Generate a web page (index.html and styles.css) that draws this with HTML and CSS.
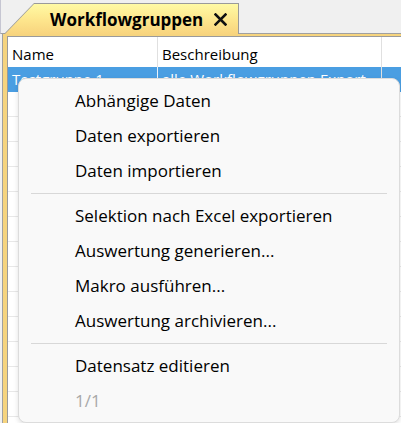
FILE: index.html
```html
<!DOCTYPE html>
<html lang="de">

<head>
    <meta charset="UTF-8">
    <meta name="viewport" content="width=device-width, initial-scale=1.0">
    <title>Workflowgruppen</title>
    <link rel="stylesheet" href="styles.css">
</head>

<body>

    <div class="window">
        <div class="tabstrip">
            <div class="tab">
                <div class="tab-face">
                    <span class="tab-title">Workflowgruppen</span>
                    <svg class="tab-close" width="13" height="13" viewBox="0 0 13 13">
                        <path d="M1.5 1.5 L11.5 11.5 M11.5 1.5 L1.5 11.5" stroke="#111" stroke-width="2.5" stroke-linecap="square" fill="none" />
                    </svg>
                </div>
            </div>
        </div>

        <div class="panel">
            <div class="frame">
                <div class="grid">
                    <div class="grid-row grid-header">
                        <div class="cell col-name">Name</div>
                        <div class="cell col-desc">Beschreibung</div>
                    </div>
                    <div class="grid-row selected">
                        <div class="cell col-name">Testgruppe 1</div>
                        <div class="cell col-desc">alle Workflowgruppen Export</div>
                    </div>
                    <div class="grid-row"><div class="cell col-name"></div><div class="cell col-desc"></div></div>
                    <div class="grid-row"><div class="cell col-name"></div><div class="cell col-desc"></div></div>
                    <div class="grid-row"><div class="cell col-name"></div><div class="cell col-desc"></div></div>
                    <div class="grid-row"><div class="cell col-name"></div><div class="cell col-desc"></div></div>
                    <div class="grid-row"><div class="cell col-name"></div><div class="cell col-desc"></div></div>
                    <div class="grid-row"><div class="cell col-name"></div><div class="cell col-desc"></div></div>
                    <div class="grid-row"><div class="cell col-name"></div><div class="cell col-desc"></div></div>
                    <div class="grid-row"><div class="cell col-name"></div><div class="cell col-desc"></div></div>
                    <div class="grid-row"><div class="cell col-name"></div><div class="cell col-desc"></div></div>
                    <div class="grid-row"><div class="cell col-name"></div><div class="cell col-desc"></div></div>
                    <div class="grid-row"><div class="cell col-name"></div><div class="cell col-desc"></div></div>
                    <div class="grid-row"><div class="cell col-name"></div><div class="cell col-desc"></div></div>
                    <div class="grid-row"><div class="cell col-name"></div><div class="cell col-desc"></div></div>
                </div>
            </div>
        </div>

        <!-- Kontextmenü der Tabelle -->
        <div class="context-menu">
            <div class="menu-item">Abhängige Daten</div>
            <div class="menu-item">Daten exportieren</div>
            <div class="menu-item">Daten importieren</div>
            <div class="menu-separator"></div>
            <div class="menu-item">Selektion nach Excel exportieren</div>
            <div class="menu-item">Auswertung generieren...</div>
            <div class="menu-item">Makro ausführen...</div>
            <div class="menu-item">Auswertung archivieren...</div>
            <div class="menu-separator"></div>
            <div class="menu-item">Datensatz editieren</div>
            <div class="menu-item disabled">1/1</div>
        </div>
    </div>

</body>

</html>
```

FILE: styles.css
```css
body {
    margin: 0;
    background: #f0f0f0;
    font-family: "Open Sans", "Noto Sans", sans-serif;
    overflow: hidden;
}

.window {
    position: relative;
    width: 401px;
    height: 423px;
    overflow: hidden;
}

/* Reiterleiste */
.tabstrip {
    height: 34px;
    box-sizing: border-box;
    padding: 4px 0 0 3px;
    border-left: 1px solid #c6c6d2;
    border-bottom: 1px solid #a0a0a0;
    display: flex;
    align-items: flex-end;
}

.tab {
    width: 235px;
    height: 31px;
    margin-bottom: -1px;
    padding: 1px 1px 0 1px;
    box-sizing: border-box;
    background: #9a9a9a;
    clip-path: polygon(30px 0, 100% 0, 100% 100%, 0 100%);
}

.tab-face {
    height: 100%;
    display: flex;
    align-items: center;
    padding-left: 45px;
    background: linear-gradient(#fffaa4, #fde58c 55%, #f8d47e);
    clip-path: polygon(29px 0, 100% 0, 100% 100%, 0 100%);
}

.tab-title {
    font-weight: bold;
    font-size: 17px;
    color: #000;
}

.tab-close {
    margin-left: 11px;
    margin-top: 1px;
}

/* Rahmen um die Tabelle */
.panel {
    margin-left: 2px;
    border-left: 1px solid #a0a0a0;
}

.frame {
    border-top: 2px solid #f6d47e;
    border-left: 4px solid #f6d47e;
}

.grid {
    background: #fff;
    border-top: 1px solid #9a9a9a;
    border-left: 1px solid #9a9a9a;
    height: 400px;
    font-size: 15px;
}

.grid-row {
    display: flex;
    height: 25px;
    box-sizing: border-box;
    border-bottom: 1px solid #e8e8e8;
}

.grid-header {
    height: 30px;
    border-bottom: none;
    align-items: flex-end;
}

.cell {
    box-sizing: border-box;
    height: 100%;
    padding: 0 4px;
    display: flex;
    align-items: center;
    white-space: nowrap;
    overflow: hidden;
    color: #000;
}

.grid-header .cell {
    padding-top: 4px;
}

.col-name {
    width: 150px;
    border-right: 1px solid #e0e0e0;
}

.col-desc {
    width: 224px;
    border-right: 1px solid #e0e0e0;
}

.selected {
    background: #4a9ee2;
    border-bottom-color: #4a9ee2;
}

.selected .cell {
    color: #fff;
}

.selected .col-name {
    border-right-color: #eaf2fb;
}

/* Kontextmenü */
.context-menu {
    position: absolute;
    left: 18px;
    top: 78px;
    width: 382px;
    box-sizing: border-box;
    padding: 4px 0;
    background: #f9f9f9;
    border: 1px solid #dcdcdc;
    border-radius: 8px;
    box-shadow: 0 2px 5px rgba(0, 0, 0, 0.12);
    font-size: 17px;
}

.menu-item {
    height: 35px;
    line-height: 35px;
    padding-left: 56px;
    color: #000;
}

.menu-item.disabled {
    color: #a8a8a8;
}

.menu-separator {
    height: 1px;
    margin: 5px 12px 4px 12px;
    background: #d8d8d8;
}
```
